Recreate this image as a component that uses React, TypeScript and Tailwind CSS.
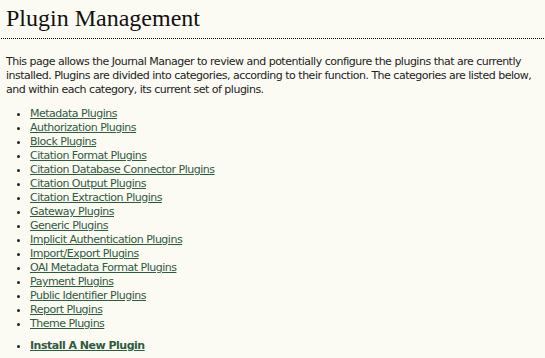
export default function App() {
  const plugins = [
    "Metadata Plugins",
    "Authorization Plugins",
    "Block Plugins",
    "Citation Format Plugins",
    "Citation Database Connector Plugins",
    "Citation Output Plugins",
    "Citation Extraction Plugins",
    "Gateway Plugins",
    "Generic Plugins",
    "Implicit Authentication Plugins",
    "Import/Export Plugins",
    "OAI Metadata Format Plugins",
    "Payment Plugins",
    "Public Identifier Plugins",
    "Report Plugins",
    "Theme Plugins",
  ]
  return (
    <div className="min-h-[358px] w-[545px] bg-[#fbfbf4] text-[#222] font-['DejaVu_Sans',Verdana,sans-serif] text-[11px] leading-[14px] tracking-[-0.5px]">
      {/* heading */}
      <div className="mx-[1px] h-[39px] border-b border-dotted border-black px-[5px] pt-[3px]">
        <h2 className="font-['Liberation_Serif',Georgia,serif] text-[24px] leading-[30px] tracking-normal text-[#111]">Plugin Management</h2>
      </div>
      <p className="px-[6px] pt-[16px]">
        This page allows the Journal Manager to review and potentially configure the plugins that are currently
        installed. Plugins are divided into categories, according to their function. The categories are listed below,
        and within each category, its current set of plugins.
      </p>
      <ul className="mt-[10px] list-disc pl-[30px]">
        {plugins.map((p) => (
          <li key={p}>
            <a href="#" className="text-[#2e5a3e] underline">{p}</a>
          </li>
        ))}
      </ul>
      <ul className="mt-[8px] list-disc pl-[30px]">
        <li>
          <a href="#" className="font-bold text-[#2e5a3e] underline">Install A New Plugin</a>
        </li>
      </ul>
    </div>
  )
}
